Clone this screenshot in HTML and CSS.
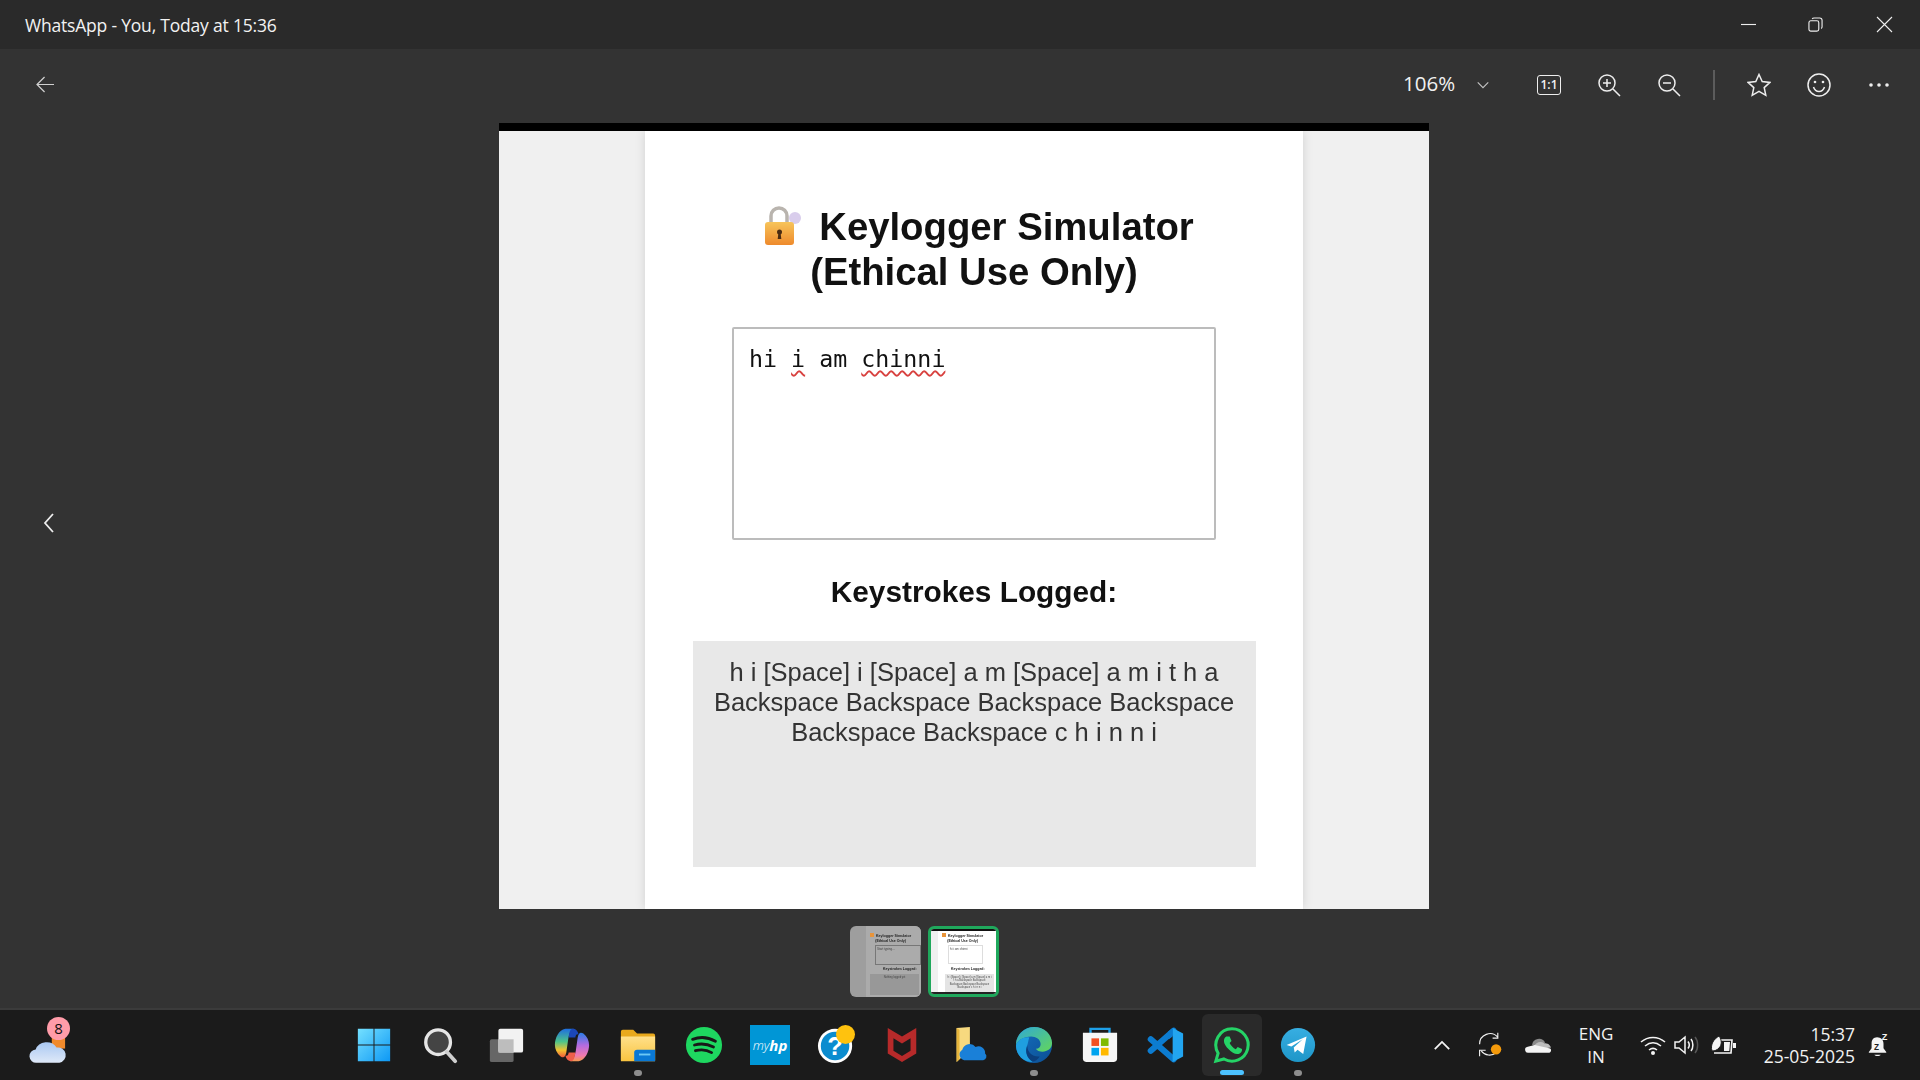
FILE: index.html
```html
<!DOCTYPE html>
<html lang="en">
<head>
<meta charset="utf-8">
<title>WhatsApp - You, Today at 15:36</title>
<link rel="stylesheet" href="styles.css">
</head>
<body>
<header class="titlebar">
  <span class="title">WhatsApp - You, Today at 15:36</span>
  <div class="winctl">
    <svg class="wc" viewBox="0 0 16 16"><path d="M0 8h16" /></svg>
    <svg class="wc" viewBox="0 0 16 16"><rect x="1" y="4" width="10.5" height="11" rx="2"/><path d="M4.500 2.200Q5 1 6.500 1H12.500Q15 1 15 3.500V10.500Q15 11.800 14 12.200"/></svg>
    <svg class="wc wc-close" viewBox="0 0 16 16"><path d="M0 0L16 16M16 0L0 16"/></svg>
  </div>
</header>
<main class="viewer">
  <div class="toolbar">
    <svg class="back" viewBox="0 0 20 18"><path d="M19 9H1M9 1L1 9l8 8"/></svg>
    <div class="tools">
      <span class="zoomval">106%</span>
      <svg class="tool chev" viewBox="0 0 16 16"><path d="M2 5l6 6 6-6"/></svg>
      <span class="tool"><span class="oneone">1:1</span></span>
      <svg class="tool" viewBox="0 0 24 24"><circle cx="10" cy="10" r="8"/><path d="M16 16l7 7M6 10h8M10 6v8"/></svg>
      <svg class="tool" viewBox="0 0 24 24"><circle cx="10" cy="10" r="8"/><path d="M16 16l7 7M6 10h8"/></svg>
      <i class="sep"></i>
      <svg class="tool" viewBox="0 0 24 24"><path d="M12 1.500l3.200 7 7.800.9-5.800 5.200 1.600 7.700L12 18.400l-6.800 3.900 1.600-7.700L1 9.400l7.800-.9z"/></svg>
      <svg class="tool" viewBox="0 0 24 24"><circle cx="12" cy="12" r="11"/><path d="M6.500 14c1 3 3 4.500 5.500 4.500s4.500-1.500 5.500-4.500"/><circle class="solid" cx="8" cy="9" r="1.300"/><circle class="solid" cx="16" cy="9" r="1.300"/></svg>
      <svg class="tool" viewBox="0 0 24 24"><circle class="solid" cx="4" cy="12" r="1.800"/><circle class="solid" cx="12" cy="12" r="1.800"/><circle class="solid" cx="20" cy="12" r="1.800"/></svg>
    </div>
  </div>
  <div class="stage">
    <svg class="prev" viewBox="0 0 12 20"><path d="M10 1L2 10l8 9"/></svg>
    <div class="doc">
      <section class="card">
        <h1 class="doc-title"><svg class="lock" viewBox="0 0 40 40"><defs><linearGradient id="lockg" x1="0" y1="0" x2="0" y2="1"><stop offset="0" stop-color="#f7c45a"/><stop offset="1" stop-color="#ee8a2c"/></linearGradient></defs><circle cx="33" cy="12" r="6" fill="#d9cdec"/><path d="M9 18V10a8 8 0 0 1 16 0v8" fill="none" stroke="#b9b4ae" stroke-width="3.500"/><rect x="3" y="16" width="29" height="23" rx="3" fill="url(#lockg)"/><circle cx="17.500" cy="26" r="2.500" fill="#4a2b12"/><path d="M16.500 26h2l.8 7h-3.600z" fill="#4a2b12"/></svg>Keylogger Simulator (Ethical Use Only)</h1>
        <div class="inputbox"><span>hi</span> <span class="typo">i</span> <span>am</span> <span class="typo">chinni</span></div>
        <h2 class="logged-title">Keystrokes Logged:</h2>
        <div class="logbox">h i [Space] i [Space] a m [Space] a m i t h a Backspace Backspace Backspace Backspace Backspace Backspace c h i n n i</div>
      </section>
    </div>
  </div>
  <div class="thumbs">
    <div class="thumb thumb-a">
      <div class="mini-card">
        <b class="mini-h"><i class="mini-lock"></i>Keylogger Simulator<br>(Ethical Use Only)</b>
        <div class="mini-input"><span>Start typing...</span></div>
        <b class="mini-h2">Keystrokes Logged:</b>
        <div class="mini-log">Nothing logged yet</div>
      </div>
    </div>
    <div class="thumb thumb-b">
      <div class="thumb-inner">
        <div class="mini-card">
          <b class="mini-h"><i class="mini-lock"></i>Keylogger Simulator<br>(Ethical Use Only)</b>
          <div class="mini-input"><span>hi i am chinni</span></div>
          <b class="mini-h2">Keystrokes Logged:</b>
          <div class="mini-log">h i [Space] i [Space] a m [Space] a m i t h a Backspace Backspace Backspace Backspace Backspace Backspace c h i n n i</div>
        </div>
      </div>
    </div>
  </div>
</main>
<footer class="taskbar">
  <div class="widget">
    <svg class="cloud" viewBox="0 0 40 30"><defs><linearGradient id="cl" x1="0" y1="0" x2="0" y2="1"><stop offset="0" stop-color="#a9c8f2"/><stop offset="1" stop-color="#dfe9f8"/></linearGradient></defs><rect x="24" y="2" width="14" height="12" fill="#f08a2c"/><path d="M8 29a7 7 0 0 1-1-14 12 11 0 0 1 22-2 8 8 0 0 1 3 16z" fill="url(#cl)"/></svg>
    <span class="badge">8</span>
  </div>
  <div class="apps">
    <span class="app"><svg viewBox="0 0 40 40"><defs><linearGradient id="w" x1="0" y1="0" x2="1" y2="1"><stop offset="0" stop-color="#74e0ff"/><stop offset="1" stop-color="#0d98f5"/></linearGradient></defs><path fill="url(#w)" d="M3 3h16.500v16.500H3zM20.500 3H37v16.500H20.500zM3 20.500h16.500V37H3zM20.500 20.500H37V37H20.500z"/></svg></span>
    <span class="app"><svg viewBox="0 0 40 40"><circle cx="18" cy="17" r="13" fill="#444" stroke="#e6e6e6" stroke-width="3.500"/><path d="M27 27l9 10" stroke="#cfcfcf" stroke-width="4" stroke-linecap="round"/></svg></span>
    <span class="app"><svg viewBox="0 0 40 40"><rect x="3" y="14" width="25" height="24" rx="2" fill="#666"/><rect x="12" y="3" width="26" height="25" rx="2" fill="#f2f2f2"/><path d="M12 14h16v14H12z" fill="#bdbdbd"/></svg></span>
    <span class="app"><svg viewBox="0 0 40 40"><defs><linearGradient id="c1" x1="0" y1="0" x2="0" y2="1"><stop offset="0" stop-color="#1f6fe0"/><stop offset=".45" stop-color="#4cc38a"/><stop offset=".75" stop-color="#f2c230"/><stop offset="1" stop-color="#ef5a3c"/></linearGradient><linearGradient id="c2" x1="0" y1="0" x2="0" y2="1"><stop offset="0" stop-color="#2a7de8"/><stop offset=".45" stop-color="#b46be0"/><stop offset=".8" stop-color="#f07ab0"/><stop offset="1" stop-color="#f59a50"/></linearGradient></defs><path fill="url(#c1)" d="M13 3h9c-4 2-5 6-6 11l-2 14c-1 5-3 6-6 4-4-3-6-8-6-12C2 13 6 4 13 3z"/><path fill="url(#c2)" d="M27 37h-9c4-2 5-6 6-11l2-14c1-5 3-6 6-4 4 3 6 8 6 12 0 7-4 16-11 17z"/><path fill="#1b47b8" d="M21 3c3 0 5 2 6 6-2-1-3 0-3.500 3h-7C17 7 18 3 21 3z"/><path fill="#ee5f4a" d="M19 37c-3 0-5-2-6-6 2 1 3 0 3.500-3h7C23 33 22 37 19 37z"/></svg></span>
    <span class="app dot"><svg viewBox="0 0 40 40"><defs><linearGradient id="fd" x1="0" y1="0" x2="0" y2="1"><stop offset="0" stop-color="#ffe08a"/><stop offset="1" stop-color="#f9c440"/></linearGradient></defs><path fill="#e9a91c" d="M2 6a2 2 0 0 1 2-2h11l4 4h17a2 2 0 0 1 2 2v26H2z"/><path fill="url(#fd)" d="M2 11h36v26H2z"/><path fill="#0a78d4" d="M16 28a3 3 0 0 1 3-3h19v12H16z"/><path fill="#6cc8f5" d="M21 29h12v2H21z"/></svg></span>
    <span class="app"><svg viewBox="0 0 40 40"><circle cx="20" cy="20" r="19" fill="#1ed760"/><path d="M8 14c8-3 17-2 24 2M10 20c7-2 14-1 20 2M11 26c6-1.500 12-1 17 2" fill="none" stroke="#181818" stroke-width="3" stroke-linecap="round"/></svg></span>
    <span class="app"><span class="myhp">my<b>hp</b></span></span>
    <span class="app"><svg viewBox="0 0 40 40"><circle cx="19" cy="21" r="18" fill="#fff"/><circle cx="19" cy="21" r="15" fill="#0b8ccf"/><text class="help-q" x="19" y="31" text-anchor="middle">?</text><circle cx="30" cy="9" r="10" fill="#ffc20e"/></svg></span>
    <span class="app"><svg viewBox="0 0 40 40"><path fill="#b72a2a" fill-rule="evenodd" d="M5 2l15 9 15-9v27L20 38 5 29zM11 13v13l9 5.500 9-5.500V13l-9 5.500z"/></svg></span>
    <span class="app"><svg viewBox="0 0 40 40"><path fill="#f7d97f" d="M8 2l14-1v24l-14 13z"/><path fill="#e7b53c" d="M8 2v36l3-3V4z"/><path fill="#1a80d8" d="M16 36a6 6 0 0 1-2-11 8 8 0 0 1 14-3 7 7 0 0 1 10 7 4 4 0 0 1-2 7z"/></svg></span>
    <span class="app dot"><svg viewBox="0 0 40 40"><defs><linearGradient id="e1" x1="0" y1="0" x2="1" y2="1"><stop offset="0" stop-color="#2fa8d8"/><stop offset="1" stop-color="#63d65a"/></linearGradient><linearGradient id="e2" x1="0" y1="0" x2="1" y2="1"><stop offset="0" stop-color="#1570c0"/><stop offset="1" stop-color="#0c4f94"/></linearGradient></defs><circle cx="20" cy="20" r="19" fill="url(#e2)"/><path fill="url(#e1)" d="M1 20C1 9 10 1 20 1c11 0 19 8 19 17 0 6-5 9-10 9-3 0-6-1-7-3 3 0 5-2 5-5 0-5-5-8-10-8C9 11 3 15 1 20z"/><path fill="#1f9fe0" d="M13 20c-3 5-1 13 6 18C8 38 1 30 1 20c2-5 8-9 14-8-1 3-1 5-2 8z"/><path fill="#0b3f7d" d="M13 21c0 7 6 12 13 11-2 4-7 6-8 5-5-3-8-10-5-16z"/></svg></span>
    <span class="app"><svg viewBox="0 0 40 40"><path fill="none" stroke="#1ea0e8" stroke-width="2.500" d="M10 8V3h20v5"/><path fill="#f6f6f6" d="M2 7h36v27a4 4 0 0 1-4 4H6a4 4 0 0 1-4-4z"/><path fill="#f25022" d="M11 13h8v8h-8z"/><path fill="#7fba00" d="M21 13h8v8h-8z"/><path fill="#00a4ef" d="M11 23h8v8h-8z"/><path fill="#ffb900" d="M21 23h8v8h-8z"/></svg></span>
    <span class="app"><svg viewBox="0 0 40 40"><path d="M28 5L4 26M4 14l24 21" stroke="#0c7cd0" stroke-width="6.500" stroke-linecap="round"/><path fill="#22a5f0" d="M27 2l11 6v24l-11 6z"/><path fill="#0c7cd0" d="M27 2v9l-4 3-1-8z"/></svg></span>
    <span class="app active"><svg viewBox="0 0 40 40"><path fill="none" stroke="#25d366" stroke-width="3.200" d="M20 3a17 17 0 1 1-8.500 31.700L3 37l2.400-8.300A17 17 0 0 1 20 3z"/><path fill="#25d366" d="M14 11c-1.500 1-2.500 2.500-2.500 4.500 0 3 2 6 5 9s6 5 9 5c2 0 3.500-1 4.500-2.500.6-1 .7-2 .5-2.700l-4.500-2.300-2 2.500c-2.500-1-5.500-4-6.500-6.500l2-2.200-2-4.800z"/></svg></span>
    <span class="app dot"><svg viewBox="0 0 40 40"><defs><linearGradient id="t" x1="0" y1="0" x2="0" y2="1"><stop offset="0" stop-color="#37aee2"/><stop offset="1" stop-color="#1e96c8"/></linearGradient></defs><circle cx="20" cy="20" r="18" fill="url(#t)"/><path fill="#fff" d="M8 20l21-9-3.500 18.500-6-4.500-3 3-1-5.500 9.500-8.500-12 7.500z"/></svg></span>
  </div>
  <div class="tray">
    <svg class="tr tr-chev" viewBox="0 0 20 12"><path d="M2 10l8-8 8 8"/></svg>
    <svg class="tr tr-sync" viewBox="0 0 30 30"><path d="M3 14A12 12 0 0 1 24 6M24 1v6h-6"/><path d="M22 24A12 12 0 0 1 5 22M3 28v-7h7"/><circle class="orange" cx="22" cy="20" r="6"/></svg>
    <svg class="tr tr-cloud" viewBox="0 0 30 20"><path fill="#8a8a8a" d="M7 10a8 8 0 0 1 15-3l-6 6z"/><path fill="#bdbdbd" d="M9 12c2-5 8-7 12-4 4 0 6 1 8 5l-10 1z"/><path fill="#f4f4f4" d="M3 19a3.500 3.500 0 0 1-1-7l8-2 18 4a3 3 0 0 1-1 5z"/></svg>
    <div class="lang"><span>ENG</span><span>IN</span></div>
    <svg class="tr tr-wifi" viewBox="0 0 26 20"><path d="M1 7c7-6 17-6 24 0M5 11c5-4 11-4 16 0M9 15c2.500-2 5.500-2 8 0"/><circle class="solid" cx="13" cy="18" r="2"/></svg>
    <svg class="tr tr-vol" viewBox="0 0 26 20"><path d="M1 7v6h4l6 5V2L5 7zM14 6.500c1.500 2 1.500 5 0 7M17 4c2.500 3 2.500 9 0 12"/><path class="dim" d="M21 2c3.500 4 3.500 12 0 16"/></svg>
    <svg class="tr tr-batt" viewBox="0 0 26 20"><path d="M6 5h15l-1 13H3"/><path class="solid" d="M22 8h3v5h-3z"/><path class="solid" d="M13 7h6l-.7 9H13z"/><path class="leaf" d="M1 16C-1 9 3 4 8 1c3 4 3 9 0 12-2 2-4 3-7 3z"/></svg>
    <div class="clock"><span>15:37</span><span>25-05-2025</span></div>
    <svg class="tr tr-bell" viewBox="0 0 24 26"><path class="solid" d="M11 4c-4 0-6 3-6 7v5l-3 4v1h19v-1l-3-4v-5c0-4-3-7-7-7z"/><path class="solid" d="M8 23h7c-1 2-6 2-7 0z"/><text class="zz" x="7.500" y="18">Z</text><text class="zz2" x="16" y="7">Z</text></svg>
  </div>
</footer>
</body>
</html>
```

FILE: styles.css
```css
* { box-sizing: border-box; }
html, body { margin: 0; height: 100%; }
body {
  width: 1920px;
  height: 1080px;
  overflow: hidden;
  display: flex;
  flex-direction: column;
  background: #333;
  color: #f2f2f2;
  font-family: "Open Sans", "Noto Sans", sans-serif;
}

/* title bar */
.titlebar {
  height: 49px;
  flex: none;
  background: #2a2a2a;
  display: flex;
  align-items: center;
  padding-left: 25px;
}
.title { font-size: 17.5px; letter-spacing: -.2px; }
.winctl { margin-left: auto; display: flex; align-items: center; padding-right: 2px; }
.wc { width: 15px; height: 15px; margin: 0 26px; fill: none; stroke: #eee; stroke-width: 1.200; overflow: visible; }
.wc-close { margin-left: 28px; }

/* viewer */
.viewer { flex: 1; display: flex; flex-direction: column; min-height: 0; }
.toolbar { height: 74px; flex: none; display: flex; align-items: center; padding-left: 36px; }
.toolbar .back { width: 19px; height: 17px; margin-bottom: 4px; fill: none; stroke: #d0d0d0; stroke-width: 1.300; }
.tools { margin-left: auto; display: flex; align-items: center; height: 40px; margin-bottom: 3px; padding-right: 11px; }
.zoomval { font-size: 20.5px; width: 68px; margin-bottom: 3px; color: #f0f0f0; }
.tool { width: 24px; height: 24px; margin: 0 18px; fill: none; stroke: #eee; stroke-width: 1.500; display: flex; align-items: center; justify-content: center; }
.tool .solid { fill: #eee; stroke: none; }
.tool.chev { width: 14px; height: 14px; margin: 0 29px 0 5px; stroke: #c4c4c4; stroke-width: 1.300; }
.oneone { border: 1.500px solid #eee; border-radius: 3px; font-size: 12px; font-weight: 600; width: 24px; height: 20px; display: block; text-align: center; line-height: 17px; flex: none; }
.sep { width: 2px; height: 30px; background: #5c5c5c; margin: 0 14px; display: block; }

.stage { height: 786px; flex: none; position: relative; display: flex; justify-content: center; padding-left: 8px; }
.prev { position: absolute; left: 43px; top: 390px; width: 12px; height: 20px; fill: none; stroke: #eee; stroke-width: 1.800; }

/* the screenshot in the viewer */
.doc {
  width: 930px;
  height: 786px;
  background: #f0f0f0;
  border-top: 8px solid #000;
  padding: 0 126px 0 146px;
  overflow: hidden;
  color: #111;
  font-family: "Liberation Sans", Arial, sans-serif;
}
.card {
  height: 100%;
  background: #fff;
  box-shadow: 0 0 10px rgba(0,0,0,.13);
  display: flex;
  flex-direction: column;
  align-items: center;
  padding-top: 73px;
  filter: blur(.7px);
}
.doc-title { margin: 0; width: 450px; font-size: 38.300px; line-height: 45px; font-weight: 700; text-align: center; }
.lock { width: 40px; height: 40px; margin: 0 17px 0 8px; vertical-align: -6px; }
.inputbox {
  width: 484px;
  height: 213px;
  margin-top: 33px;
  border: 2px solid #bcbcbc;
  border-radius: 2px;
  padding: 15px;
  font-family: "DejaVu Sans Mono", monospace;
  font-size: 23.300px;
  line-height: 30px;
  color: #111;
}
.typo { text-decoration: underline wavy #d8413f 1.500px; text-underline-offset: 3px; }
.logged-title { margin: 34px 0 0; font-size: 29.800px; line-height: 36px; font-weight: 700; }
.logbox {
  width: 563px;
  height: 226px;
  margin-top: 31px;
  background: #e8e8e8;
  padding: 16px 18px;
  font-size: 25.500px;
  line-height: 30px;
  text-align: center;
  color: #333;
}

/* thumbnails */
.thumbs { flex: 1; display: flex; justify-content: center; gap: 7px; padding: 17px 71px 0 0; }
.thumb { width: 71px; height: 71px; border-radius: 6px; overflow: hidden; color: #222; font-family: "Liberation Sans", Arial, sans-serif; }
.thumb-a { background: #9e9e9e; padding-left: 16px; }
.thumb-a .mini-card { background: #ababab; padding-top: 7px; }
.thumb-b { border: 3px solid #1fa85c; }
.thumb-inner { height: 100%; background: #f0f0f0; border-top: 2px solid #111; border-bottom: 2px solid #222; padding-left: 7px; }
.mini-card { width: 100%; height: 100%; background: #fff; display: flex; flex-direction: column; align-items: flex-start; padding-top: 2px; filter: blur(.5px); overflow: hidden; }
.mini-h { font-size: 3.600px; line-height: 5px; white-space: nowrap; text-align: center; margin-left: 4px; flex: none; }
.mini-lock { display: inline-block; width: 4px; height: 4px; background: #e8943a; margin-right: 2px; }
.mini-input { width: 35px; height: 19px; border: 1px solid #ddd; margin: 1px 0 0 10px; font-size: 3px; line-height: 4px; padding: 1px; color: #444; flex: none; }
.thumb-a .mini-input { width: 46px; height: 20px; margin-left: 9px; border-color: #777; }
.mini-h2 { font-size: 3.500px; line-height: 4px; margin: 3px 0 0 13px; white-space: nowrap; flex: none; }
.thumb-a .mini-h2 { margin: 2px 0 0 17px; }
.mini-log { width: 49px; height: 20px; background: #e4e4e4; margin: 3px 0 0 7px; font-size: 2.600px; line-height: 3.300px; text-align: center; padding: 2px; color: #444; flex: none; }
.thumb-a .mini-log { height: 21px; margin-left: 4px; background: #989898; }

/* taskbar */
.taskbar {
  height: 72px;
  flex: none;
  background: #1b1b1b;
  border-top: 2px solid #3b3b3b;
  display: flex;
  align-items: center;
}
.widget { width: 341px; height: 100%; flex: none; position: relative; padding: 25px 0 0 29px; }
.cloud { width: 38px; height: 29px; display: block; }
.badge { position: absolute; left: 47px; top: 7px; width: 23px; height: 23px; border-radius: 50%; background: #ff9ca9; color: #111; font-size: 15px; line-height: 23px; text-align: center; }
.apps { display: flex; align-items: center; height: 100%; }
.app { width: 66px; height: 100%; display: flex; align-items: center; justify-content: center; position: relative; }
.app svg { width: 38px; height: 38px; display: block; overflow: visible; }
.app.dot::after { content: ""; position: absolute; left: 29px; bottom: 4px; width: 8px; height: 6px; border-radius: 3px; background: #8e8e8e; }
.app.active::before { content: ""; position: absolute; left: 3px; top: 4px; right: 3px; bottom: 4px; border-radius: 6px; background: #2a2a2a; }
.app.active::after { content: ""; position: absolute; left: 21px; bottom: 5px; width: 24px; height: 5px; border-radius: 3px; background: #4cc2ff; }
.app.active svg { position: relative; }
.myhp { width: 40px; height: 40px; background: #0096d6; color: #fff; display: flex; align-items: center; justify-content: center; font-size: 13px; font-style: italic; font-family: "Open Sans", sans-serif; font-weight: 300; }
.myhp b { font-weight: 700; font-size: 15px; }
.help-q { font: 700 27px "Liberation Sans", sans-serif; fill: #fff; }

.tray { margin-left: auto; width: 508px; display: flex; align-items: center; height: 100%; flex: none; }
.tr { display: block; fill: none; stroke: #f4f4f4; stroke-width: 1.600; flex: none; overflow: visible; }
.tr .solid { fill: #f4f4f4; stroke: none; }
.tr .leaf { fill: #f4f4f4; stroke: #1b1b1b; stroke-width: 1; }
.tr .dim { stroke: #555; }
.tr .orange { fill: #f59a0b; stroke: none; }
.tr-chev { width: 18px; height: 11px; margin: 0 21px; stroke-width: 2; }
.tr-sync { width: 26px; height: 26px; margin: 0 5px; stroke-width: 1.300; }
.tr-cloud { width: 26px; height: 18px; margin: 0 18px; stroke: none; }
.lang { width: 52px; margin-right: 14px; font-size: 17px; line-height: 23px; display: flex; flex-direction: column; align-items: center; color: #f2f2f2; }
.tr-wifi { width: 26px; height: 20px; margin: 0 4px; }
.tr-vol { width: 26px; height: 20px; margin: 0 4px; stroke-width: 1.500; }
.tr-batt { width: 26px; height: 20px; margin: 0 7px; }
.clock { width: 115px; padding-right: 4px; font-size: 17.500px; line-height: 22px; display: flex; flex-direction: column; align-items: flex-end; color: #f2f2f2; }
.tr-bell { width: 22px; height: 25px; margin: 0 8px; stroke: none; }
.zz { font: 700 9px "Liberation Sans", sans-serif; fill: #1b1b1b; }
.zz2 { font: 700 10px "Liberation Sans", sans-serif; fill: #f4f4f4; }
```
